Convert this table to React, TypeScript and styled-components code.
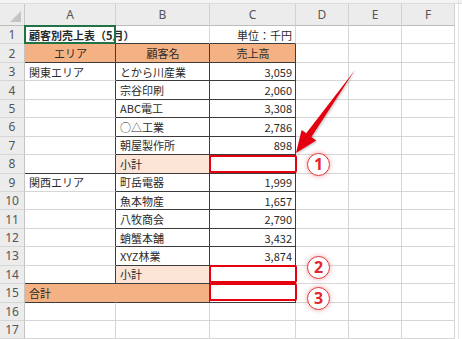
import React from 'react';
import styled, { createGlobalStyle } from 'styled-components';

const GlobalStyle = createGlobalStyle`
  body {
    margin: 0;
    background: #fff;
  }
`;

const DARK = '#3c3c3c';
const GRID = '#d6d6d6';
const RED = '#e5000f';

const Page = styled.div`
  position: relative;
  width: 462px;
  height: 339px;
  overflow: hidden;
  background: #fff;
  font-family: 'Noto Sans CJK JP', 'Noto Sans', sans-serif;

  &::after {
    content: '';
    position: absolute;
    top: 0;
    bottom: 0;
    right: 3px;
    width: 1px;
    background: #e2e2e2;
  }
`;

const TopBand = styled.div`
  height: 3px;
  background: #f4f4f4;
  border-bottom: 1px solid #dcdcdc;
`;

const Sheet = styled.div`
  display: grid;
  grid-template-columns: 25px 91px 94px 86px 53px 53px 53px;
  grid-template-rows: 22px repeat(17, 18.45px);
`;

const Corner = styled.div`
  position: relative;
  background: #ececec;
  border-right: 1px solid #c8c8c8;
  border-bottom: 1px solid #bdbdbd;

  &::after {
    content: '';
    position: absolute;
    right: 3px;
    bottom: 3px;
    width: 0;
    height: 0;
    border-left: 11px solid transparent;
    border-bottom: 11px solid #c4c4c4;
  }
`;

const ColHead = styled.div`
  display: flex;
  align-items: center;
  justify-content: center;
  background: #ececec;
  border-right: 1px solid #d2d2d2;
  border-bottom: 1px solid #bdbdbd;
  color: #555;
  font-family: 'Noto Sans', 'Liberation Sans', sans-serif;
  font-size: 12px;
`;

const RowHead = styled.div`
  display: flex;
  align-items: center;
  justify-content: center;
  background: #ececec;
  border-right: 1px solid #c4c4c4;
  border-bottom: 1px solid #d6d6d6;
  color: #555;
  font-family: 'Noto Sans', 'Liberation Sans', sans-serif;
  font-size: 12px;
`;

type Fill = 'none' | 'head' | 'sub';

const fills: Record<Fill, string> = {
  none: '#fff',
  head: '#f4b183',
  sub: '#fce4d6',
};

const Cell = styled.div<{
  $fill?: Fill;
  $align?: 'left' | 'center' | 'right';
  $bold?: boolean;
  $r?: boolean;
  $b?: boolean;
  $merge?: boolean;
}>`
  display: flex;
  align-items: center;
  justify-content: ${(p) =>
    p.$align === 'right' ? 'flex-end' : p.$align === 'center' ? 'center' : 'flex-start'};
  padding: 0 3px 0 4px;
  background: ${(p) => fills[p.$fill || 'none']};
  border-right: 1px solid
    ${(p) => (p.$merge ? fills[p.$fill || 'none'] : p.$r ? DARK : GRID)};
  border-bottom: 1px solid ${(p) => (p.$b ? DARK : GRID)};
  color: #2a2a2a;
  font-size: 11px;
  font-weight: ${(p) => (p.$bold ? 700 : 400)};
  white-space: nowrap;
  overflow: visible;
  min-width: 0;
`;

const TitleCell = styled(Cell)`
  position: relative;
  z-index: 2;
  background: transparent;

  &::after {
    content: '';
    position: absolute;
    inset: -1px -1px -1px -1px;
    border: 2px solid #217346;
    pointer-events: none;
  }
`;

const RedBox = styled.div<{ $top: number }>`
  position: absolute;
  left: 209px;
  top: ${(p) => p.$top}px;
  width: 88px;
  height: 18px;
  box-sizing: border-box;
  border: 2.5px solid ${RED};
  border-radius: 2px;
  z-index: 3;
`;

const Badge = styled.div<{ $top: number }>`
  position: absolute;
  left: 307px;
  top: ${(p) => p.$top}px;
  width: 23px;
  height: 23px;
  box-sizing: border-box;
  border-radius: 50%;
  border: 1.5px solid #e4363c;
  background: #fff;
  box-shadow: 0 0 5px rgba(220, 40, 40, 0.4);
  color: #e4262c;
  font-family: 'Noto Sans', 'Liberation Sans', sans-serif;
  font-weight: 700;
  font-size: 16px;
  line-height: 20px;
  text-align: center;
  z-index: 3;
`;

const Arrow = styled.svg`
  position: absolute;
  left: 0;
  top: 0;
  z-index: 4;
  filter: drop-shadow(1px 1px 1px rgba(0, 0, 0, 0.25));
`;

type Row = {
  a?: string;
  b?: string;
  c?: string;
  kind?: 'title' | 'head' | 'data' | 'sub' | 'total' | 'empty';
  groupEnd?: boolean;
};

const rows: Row[] = [
  { kind: 'title', a: '顧客別売上表（5月）', c: '単位：千円' },
  { kind: 'head', a: 'エリア', b: '顧客名', c: '売上高' },
  { kind: 'data', a: '関東エリア', b: 'とから川産業', c: '3,059' },
  { kind: 'data', b: '宗谷印刷', c: '2,060' },
  { kind: 'data', b: 'ABC電工', c: '3,308' },
  { kind: 'data', b: '○△工業', c: '2,786' },
  { kind: 'data', b: '朝屋製作所', c: '898' },
  { kind: 'sub', b: '小計', groupEnd: true },
  { kind: 'data', a: '関西エリア', b: '町岳電器', c: '1,999' },
  { kind: 'data', b: '魚本物産', c: '1,657' },
  { kind: 'data', b: '八牧商会', c: '2,790' },
  { kind: 'data', b: '蛸蟹本舗', c: '3,432' },
  { kind: 'data', b: 'XYZ林業', c: '3,874' },
  { kind: 'sub', b: '小計', groupEnd: true },
  { kind: 'total', a: '合計' },
  { kind: 'empty' },
  { kind: 'empty' },
];

const columns = ['A', 'B', 'C', 'D', 'E', 'F'];

function renderRow(row: Row, i: number) {
  const n = i + 1;
  const blanks = [0, 1, 2].map((k) => <Cell key={`e${k}`} />);
  let cells: React.ReactNode;

  switch (row.kind) {
    case 'title':
      cells = (
        <>
          <TitleCell $bold $b>
            {row.a}
          </TitleCell>
          <Cell $b />
          <Cell $align="right" $b>
            {row.c}
          </Cell>
        </>
      );
      break;
    case 'head':
      cells = (
        <>
          <Cell $fill="head" $align="center" $r $b>
            {row.a}
          </Cell>
          <Cell $fill="head" $align="center" $r $b>
            {row.b}
          </Cell>
          <Cell $fill="head" $align="center" $r $b>
            {row.c}
          </Cell>
        </>
      );
      break;
    case 'data':
    case 'sub':
      cells = (
        <>
          <Cell $r $b={row.groupEnd}>
            {row.a}
          </Cell>
          <Cell $fill={row.kind === 'sub' ? 'sub' : 'none'} $r $b>
            {row.b}
          </Cell>
          <Cell $align="right" $r $b>
            {row.c}
          </Cell>
        </>
      );
      break;
    case 'total':
      cells = (
        <>
          <Cell $fill="head" $merge $b>
            {row.a}
          </Cell>
          <Cell $fill="head" $r $b />
          <Cell $r $b />
        </>
      );
      break;
    default:
      cells = (
        <>
          <Cell />
          <Cell />
          <Cell />
        </>
      );
  }

  return (
    <React.Fragment key={n}>
      <RowHead>{n}</RowHead>
      {cells}
      {blanks}
    </React.Fragment>
  );
}

export default function App() {
  return (
    <>
      <GlobalStyle />
      <Page>
        <TopBand />
        <Sheet>
          <Corner />
          {columns.map((c) => (
            <ColHead key={c}>{c}</ColHead>
          ))}
          {rows.map(renderRow)}
        </Sheet>

        <RedBox $top={155} />
        <RedBox $top={265} />
        <RedBox $top={283} />

        <Badge $top={153}>1</Badge>
        <Badge $top={256}>2</Badge>
        <Badge $top={287}>3</Badge>

        <Arrow width="462" height="339" viewBox="0 0 462 339">
          <polygon
            points="355,70 311.4,137 316.2,140.4 296,153 301.6,130 306.2,133.2"
            fill={RED}
          />
        </Arrow>
      </Page>
    </>
  );
}
